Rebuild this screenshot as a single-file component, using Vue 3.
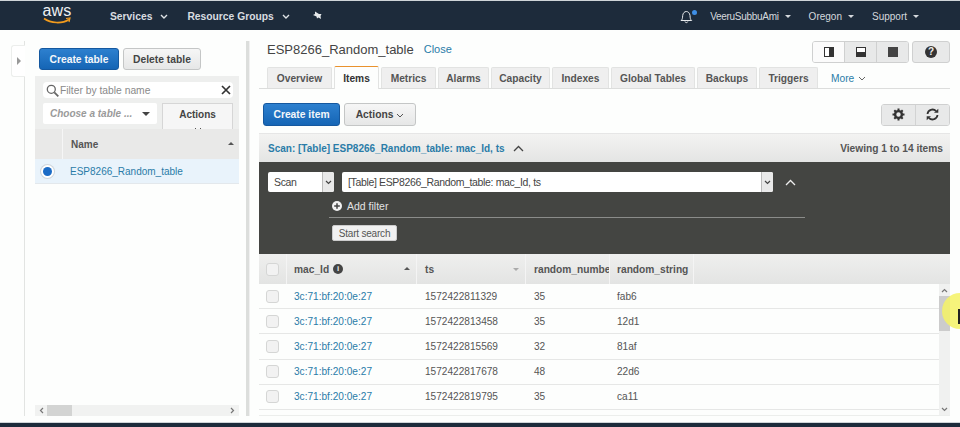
<template>
  <div class="page">
    <header class="topbar">
      <div class="logo">
        <span class="logo-text">aws</span>
        <svg width="29" height="8" viewBox="0 0 29 8"><path d="M1 1.5C8 6.5 19 7 26 2.5" fill="none" stroke="#f29b1d" stroke-width="1.6"/><path d="M23 1.5l4-.5-1 4" fill="none" stroke="#f29b1d" stroke-width="1.2"/></svg>
      </div>
      <nav class="nav-left">
        <span class="nav-item">Services <svg class="chev" width="8" height="5" viewBox="0 0 8 5"><path d="M1 1l3 3 3-3" fill="none" stroke="#dfe3e6" stroke-width="1.4"/></svg></span>
        <span class="nav-item">Resource Groups <svg class="chev" width="8" height="5" viewBox="0 0 8 5"><path d="M1 1l3 3 3-3" fill="none" stroke="#dfe3e6" stroke-width="1.4"/></svg></span>
        <svg class="pin" width="10" height="11" viewBox="0 0 10 11"><path d="M3 .5l4 2.500 2.500 0-1 2 .5 3-2.500-1.500-1.500 1-.5-2L1 4l2-1z" fill="#e6e9eb"/></svg>
      </nav>
      <nav class="nav-right">
        <span class="bell">
          <svg width="13" height="14" viewBox="0 0 13 14"><path d="M1 10.500c1.500-1 1.500-2.500 1.700-5C3 3 4.500 1.500 6.300 1.500S9.700 3 10 5.500c.2 2.500.2 4 1.700 5zM5 11.500c.3 1.500 2.500 1.500 2.800 0" fill="none" stroke="#e6e9eb" stroke-width="1"/></svg>
          <i class="dot"></i>
        </span>
        <span class="nav-small user">VeeruSubbuAmi <b class="caret"></b></span>
        <span class="nav-small region">Oregon <b class="caret"></b></span>
        <span class="nav-small">Support <b class="caret"></b></span>
      </nav>
    </header>

    <main class="main">
      <div class="rail">
        <div class="handle"><b></b></div>
      </div>

      <section class="left">
        <div class="left-buttons">
          <button class="btn primary" type="button">Create table</button>
          <button class="btn" type="button">Delete table</button>
        </div>
        <div class="filter-panel">
          <div class="search">
            <svg width="13" height="13" viewBox="0 0 13 13"><circle cx="5.300" cy="5.300" r="4" fill="none" stroke="#666" stroke-width="1.300"/><path d="M8.300 8.300l4 4" stroke="#666" stroke-width="1.800"/></svg>
            <span class="search-text">Filter by table name</span>
            <svg width="10" height="10" viewBox="0 0 10 10"><path d="M1 1l8 8M9 1l-8 8" stroke="#333" stroke-width="1.700"/></svg>
          </div>
          <div class="filter-row">
            <div class="choose"><span>Choose a table ...</span><b></b></div>
            <div class="actions-mini">
              <span>Actions</span>
              <svg width="8" height="5" viewBox="0 0 8 5"><path d="M1 1l3 3 3-3" fill="none" stroke="#555" stroke-width="1"/></svg>
            </div>
          </div>
        </div>
        <div class="name-head">
          <div class="radio-head"></div>
          <div class="name-title">Name</div>
          <b class="sort-up"></b>
        </div>
        <div class="name-row">
          <span class="radio"></span>
          <a class="link">ESP8266_Random_table</a>
        </div>
        <div class="spacer"></div>
        <div class="hscroll">
          <svg width="5" height="7" viewBox="0 0 5 7"><path d="M4 1L1.500 3.500 4 6" fill="none" stroke="#777" stroke-width="1.200"/></svg>
          <div class="hthumb"></div>
          <svg class="hnext" width="5" height="7" viewBox="0 0 5 7"><path d="M1 1l2.500 2.500L1 6" fill="none" stroke="#777" stroke-width="1.200"/></svg>
        </div>
      </section>

      <div class="divider"></div>

      <section class="right">
        <div class="title-row">
          <h1>ESP8266_Random_table</h1>
          <a class="close-link">Close</a>
          <div class="title-tools">
            <div class="seg">
              <span class="seg-btn active"><i class="ico ico-split"></i></span>
              <span class="seg-btn"><i class="ico ico-bottom"></i></span>
              <span class="seg-btn"><i class="ico ico-full"></i></span>
            </div>
            <span class="help"><i>?</i></span>
          </div>
        </div>

        <div class="tabs">
          <span
            v-for="t in tabs"
            :key="t.name"
            :class="['tab', { current: t.name === 'Items' }]"
            :style="{ width: t.width + 'px' }"
          >{{ t.name }}</span>
          <a class="more">More <svg width="8" height="5" viewBox="0 0 8 5"><path d="M1 1l3 3 3-3" fill="none" stroke="#666" stroke-width="1"/></svg></a>
        </div>

        <div class="toolbar">
          <button class="btn primary item-btn" type="button">Create item</button>
          <button class="btn actions-btn" type="button">Actions <svg width="8" height="5" viewBox="0 0 8 5"><path d="M1 1l3 3 3-3" fill="none" stroke="#555" stroke-width="1"/></svg></button>
          <div class="tool-group">
            <span class="tool">
              <svg width="13" height="13" viewBox="0 0 13 13"><circle cx="6.500" cy="6.500" r="3.400" fill="none" stroke="#333" stroke-width="2.400"/><path d="M6.500.5v2.400M6.500 10.100v2.400M.5 6.500h2.400M10.100 6.500h2.400M2.300 2.300l1.700 1.700M9 9l1.700 1.700M10.700 2.300L9 4M4 9l-1.700 1.700" stroke="#333" stroke-width="2"/></svg>
            </span>
            <span class="tool">
              <svg width="15" height="13" viewBox="0 0 15 13"><path d="M2.500 6A5 5 0 0 1 11 3M12.500 7A5 5 0 0 1 4 10" fill="none" stroke="#333" stroke-width="1.800"/><path d="M9 4.800h4.300V.7zM6 8.200H1.700v4.100z" fill="#333"/></svg>
            </span>
          </div>
        </div>

        <div class="scan-head">
          <a class="scan-title">Scan: [Table] ESP8266_Random_table: mac_Id, ts</a>
          <svg width="11" height="7" viewBox="0 0 11 7"><path d="M1 6l4.500-4.500L10 6" fill="none" stroke="#444" stroke-width="1.300"/></svg>
          <span class="viewing">Viewing 1 to 14 items</span>
        </div>

        <div class="scan-panel">
          <div class="scan-row">
            <div class="select scan-select"><span>Scan</span><b><svg width="7" height="5" viewBox="0 0 7 5"><path d="M1 1l2.500 2.500L6 1" fill="none" stroke="#444" stroke-width="1.200"/></svg></b></div>
            <div class="select index-select"><span>[Table] ESP8266_Random_table: mac_Id, ts</span><b><svg width="7" height="5" viewBox="0 0 7 5"><path d="M1 1l2.500 2.500L6 1" fill="none" stroke="#444" stroke-width="1.200"/></svg></b></div>
            <svg class="collapse" width="11" height="7" viewBox="0 0 11 7"><path d="M1 6l4.500-4.500L10 6" fill="none" stroke="#eee" stroke-width="1.300"/></svg>
          </div>
          <div class="add-filter">
            <svg width="10" height="10" viewBox="0 0 10 10"><circle cx="5" cy="5" r="5" fill="#f2f2f2"/><path d="M5 2.200v5.600M2.200 5h5.600" stroke="#444" stroke-width="1.500"/></svg>
            <span>Add filter</span>
          </div>
          <div class="rule"></div>
          <button class="start" type="button">Start search</button>
        </div>

        <div class="grid-wrap">
          <div class="grid-head">
            <div class="c-check"><span class="check"></span></div>
            <div class="c-mac hcell">mac_Id <i class="info">i</i><b class="sort-up"></b></div>
            <div class="c-ts hcell">ts<b class="sort-dn"></b></div>
            <div class="c-num hcell clip">random_number</div>
            <div class="c-str hcell">random_string</div>
          </div>
          <div class="grid-body">
            <div v-for="r in rows" :key="r.ts" class="grid-row">
              <div class="c-check"><span class="check"></span></div>
              <div class="c-mac"><a class="link">{{ r.mac }}</a></div>
              <div class="c-ts">{{ r.ts }}</div>
              <div class="c-num">{{ r.num }}</div>
              <div class="c-str">{{ r.str }}</div>
            </div>
            <div class="grid-row partial"><div class="c-check"><span class="check"></span></div></div>
            <div class="vscroll">
              <svg width="7" height="5" viewBox="0 0 7 5"><path d="M1 4l2.500-2.500L6 4" fill="none" stroke="#777" stroke-width="1.200"/></svg>
              <div class="vthumb"></div>
              <svg class="vnext" width="7" height="5" viewBox="0 0 7 5"><path d="M1 1l2.500 2.500L6 1" fill="none" stroke="#777" stroke-width="1.200"/></svg>
            </div>
          </div>
        </div>
      </section>
    </main>

    <div class="cursor-spot"><i></i></div>
    <footer class="bottombar"></footer>
  </div>
</template>

<script setup>
const tabs = [
  { name: 'Overview', width: 65 },
  { name: 'Items', width: 45 },
  { name: 'Metrics', width: 55 },
  { name: 'Alarms', width: 51 },
  { name: 'Capacity', width: 59 },
  { name: 'Indexes', width: 57 },
  { name: 'Global Tables', width: 84 },
  { name: 'Backups', width: 60 },
  { name: 'Triggers', width: 59 }
]

const rows = [
  { mac: '3c:71:bf:20:0e:27', ts: '1572422811329', num: 35, str: 'fab6' },
  { mac: '3c:71:bf:20:0e:27', ts: '1572422813458', num: 35, str: '12d1' },
  { mac: '3c:71:bf:20:0e:27', ts: '1572422815569', num: 32, str: '81af' },
  { mac: '3c:71:bf:20:0e:27', ts: '1572422817678', num: 48, str: '22d6' },
  { mac: '3c:71:bf:20:0e:27', ts: '1572422819795', num: 35, str: 'ca11' }
]
</script>

<style>
html, body { margin: 0; background: #fdfefd; overflow: hidden; }
</style>

<style scoped>
.page {
  position: relative;
  width: 960px;
  height: 427px;
  overflow: hidden;
  display: flex;
  flex-direction: column;
  font-family: "Liberation Sans", Arial, sans-serif;
  font-size: 11px;
  color: #444;
  background: #fdfefd;
}

/* top bar */
.topbar {
  height: 29px;
  flex: none;
  display: flex;
  align-items: center;
  background: #1d2b3b;
  border-top: 1px solid #cfd4d8;
  box-sizing: content-box;
}
.logo {
  margin-left: 42px;
  width: 30px;
  display: flex;
  flex-direction: column;
  align-items: center;
  height: 26px;
}
.logo-text {
  font-size: 16px;
  line-height: 15px;
  color: #eef0f2;
  letter-spacing: 0.2px;
}
.logo svg { margin-top: -1px; }
.nav-left {
  margin-left: 38px;
  margin-top: 2px;
  display: flex;
  align-items: center;
}
.nav-item {
  font-size: 10.300px;
  font-weight: bold;
  color: #d9dde0;
  margin-right: 19px;
  display: flex;
  align-items: center;
  gap: 8px;
}
.pin { margin-left: 3px; }
.nav-right {
  margin-left: auto;
  margin-top: 2px;
  display: flex;
  align-items: center;
  margin-right: 41px;
}
.bell { position: relative; display: flex; margin-right: 17px; }
.dot {
  position: absolute;
  right: -4px;
  top: 0;
  width: 5px;
  height: 5px;
  border-radius: 50%;
  background: #3f8fe6;
}
.nav-small {
  font-size: 10px;
  color: #d5d9dd;
  display: flex;
  align-items: center;
  gap: 6px;
}
.user { margin-right: 18px; letter-spacing: -0.3px; }
.region { margin-right: 18px; }
.caret {
  display: inline-block;
  border-left: 3px solid transparent;
  border-right: 3px solid transparent;
  border-top: 3px solid #d5d9dd;
}

/* layout */
.main {
  flex: 1;
  min-height: 0;
  display: flex;
  padding-bottom: 6px;
}
.rail {
  width: 24px;
  flex: none;
  margin-top: 11px;
  border-right: 1px solid #e2e4e2;
  position: relative;
}
.handle {
  position: absolute;
  left: 11px;
  top: 4px;
  width: 13px;
  height: 30px;
  background: #fff;
  border: 1px solid #eceeec;
  border-right: 0;
  border-radius: 3px 0 0 3px;
  display: flex;
  align-items: center;
  justify-content: center;
}
.handle b {
  border-left: 4px solid #999;
  border-top: 4px solid transparent;
  border-bottom: 4px solid transparent;
}
.left {
  width: 204px;
  flex: none;
  margin-left: 10px;
  display: flex;
  flex-direction: column;
}
.left-buttons {
  display: flex;
  gap: 4px;
  padding: 18px 0 6px 4px;
}
.btn {
  height: 22px;
  padding: 0;
  font-family: inherit;
  font-size: 10.300px;
  font-weight: bold;
  color: #444;
  border: 1px solid #c4c6c6;
  border-radius: 3px;
  background: linear-gradient(#f6f6f6, #e6e7e7);
}
.left-buttons .btn { width: 78px; }
.left-buttons .btn.primary { width: 80px; }
.btn.primary {
  color: #f4f7fa;
  background: linear-gradient(#2d80cf, #1565b5);
  border-color: #15589f;
}
.filter-panel {
  background: #eeefee;
  height: 53px;
  box-sizing: border-box;
  padding: 6px 6px 0 8px;
  flex: none;
}
.search {
  height: 16px;
  background: #fff;
  border-radius: 4px;
  display: flex;
  align-items: center;
  padding: 0 2px 0 3px;
  gap: 1px;
}
.search-text { flex: 1; font-size: 10.300px; color: #8a8a8a; }
.filter-row {
  display: flex;
  gap: 5px;
  margin-top: 5px;
}
.choose {
  width: 114px;
  height: 21px;
  background: #fff;
  border-radius: 2px;
  box-sizing: border-box;
  padding: 0 7px;
  display: flex;
  align-items: center;
  justify-content: space-between;
  font-size: 10px;
  font-style: italic;
  font-weight: bold;
  color: #9a9a9a;
}
.choose b {
  border-left: 4px solid transparent;
  border-right: 4px solid transparent;
  border-top: 4px solid #444;
}
.actions-mini {
  width: 71px;
  height: 26px;
  padding-top: 5px;
  box-sizing: border-box;
  display: flex;
  flex-direction: column;
  align-items: center;
  overflow: hidden;
  font-size: 10px;
  font-weight: bold;
  background: #f6f6f6;
  border: 1px solid #d6d6d6;
  border-bottom: 0;
}
.actions-mini svg { flex: none; margin-top: 7px; }
.name-head {
  height: 30px;
  flex: none;
  display: flex;
  align-items: center;
  background: #e9e9e8;
  position: relative;
}
.radio-head {
  width: 27px;
  height: 100%;
  border-right: 1px solid #f6f6f6;
}
.name-title {
  margin-left: 8px;
  font-weight: bold;
  font-size: 10px;
  color: #555;
}
.sort-up {
  position: absolute;
  right: 5px;
  top: 13px;
  border-left: 3px solid transparent;
  border-right: 3px solid transparent;
  border-bottom: 3px solid #555;
}
.name-row {
  height: 25px;
  flex: none;
  display: flex;
  align-items: center;
  background: #e9f3fb;
  border-bottom: 1px solid #e3e8ec;
  box-sizing: border-box;
  padding-left: 8px;
}
.radio {
  width: 9px;
  height: 9px;
  border-radius: 50%;
  background: #1c6cc6;
  box-shadow: 0 0 0 2px #fff, 0 0 0 3px #cfd6dc;
  margin-right: 18px;
}
.link { color: #2a7ca8; font-size: 10px; }
.spacer { flex: 1; }
.hscroll {
  height: 11px;
  flex: none;
  background: #f1f2f1;
  display: flex;
  align-items: center;
  padding: 0 4px 0 4px;
}
.hthumb { width: 25px; height: 11px; background: #d3d4d3; margin-left: 3px; }
.hnext { margin-left: auto; }
.divider {
  width: 4px;
  flex: none;
  margin-left: 7px;
  margin-top: 11px;
  background: #dcdedc;
  border-right: 1px solid #f0f0f0;
  box-sizing: border-box;
}

/* right side */
.right {
  width: 691px;
  flex: none;
  display: flex;
  flex-direction: column;
  position: relative;
  margin-left: 9px;
}
.title-row {
  height: 36px;
  flex: none;
  display: flex;
  align-items: center;
  padding: 0 0 0 8px;
  box-sizing: border-box;
  margin-top: 1px;
}
h1 {
  margin: 0;
  font-size: 13px;
  font-weight: normal;
  color: #444;
}
.close-link { margin-left: 10px; color: #2a7ca8; font-size: 11px; }
.title-tools {
  margin-left: auto;
  align-self: flex-start;
  display: flex;
  gap: 3px;
  margin-top: 10px;
}
.seg {
  display: flex;
  width: 97px;
  height: 22px;
  border: 1px solid #cfd0d0;
  border-radius: 3px;
  box-sizing: border-box;
  overflow: hidden;
}
.seg-btn {
  flex: 1;
  display: flex;
  align-items: center;
  justify-content: center;
  background: #e8e9e9;
  border-left: 1px solid #cfd0d0;
}
.seg-btn:first-child { border-left: 0; }
.seg-btn.active { background: #fbfbfb; }
.ico {
  width: 10px;
  height: 10px;
  box-sizing: border-box;
  border: 1.500px solid #333;
  background: #fff;
}
.ico-split { background: linear-gradient(90deg, #fff 50%, #333 50%); }
.ico-bottom { background: linear-gradient(#fff 50%, #333 50%); }
.ico-full { background: #444; border-color: #444; }
.help {
  width: 38px;
  height: 22px;
  border: 1px solid #cfd0d0;
  border-radius: 3px;
  background: #e8e9e9;
  box-sizing: border-box;
  display: flex;
  align-items: center;
  justify-content: center;
}
.help i {
  width: 12px;
  height: 12px;
  border-radius: 50%;
  background: #333;
  color: #eee;
  font-style: normal;
  font-weight: bold;
  font-size: 10px;
  line-height: 12px;
  text-align: center;
}
.tabs {
  height: 22px;
  flex: none;
  display: flex;
  align-items: flex-end;
  gap: 2px;
  padding-left: 8px;
  border-bottom: 1px solid #dcdddc;
  box-sizing: border-box;
}
.tab {
  height: 21px;
  box-sizing: border-box;
  padding-top: 1px;
  display: flex;
  align-items: center;
  justify-content: center;
  font-size: 10.200px;
  font-weight: bold;
  color: #555;
  background: #efefef;
  border: 1px solid #e2e3e2;
  border-bottom: 0;
  border-radius: 2px 2px 0 0;
}
.tab.current {
  height: 23px;
  margin-bottom: -1px;
  background: #fdfefd;
  color: #333;
  border-top: 1px solid #e9922d;
}
.more {
  margin-left: 11px;
  height: 21px;
  padding-top: 1px;
  box-sizing: border-box;
  display: flex;
  align-items: center;
  gap: 4px;
  color: #2a7ca8;
  font-size: 10.200px;
}
.toolbar {
  height: 44px;
  flex: none;
  display: flex;
  align-items: center;
  padding: 7px 0 0 4px;
  gap: 4px;
  box-sizing: border-box;
}
.item-btn { width: 77px; height: 23px; }
.actions-btn { width: 72px; height: 23px; }
.tool-group {
  margin-left: auto;
  display: flex;
  width: 69px;
  height: 22px;
  border: 1px solid #cfd0d0;
  border-radius: 3px;
  box-sizing: border-box;
  overflow: hidden;
}
.tool {
  flex: 1;
  display: flex;
  align-items: center;
  justify-content: center;
  background: #e8e9e9;
  border-left: 1px solid #d2d3d3;
}
.tool:first-child { border-left: 0; }
.scan-head {
  height: 29px;
  flex: none;
  display: flex;
  align-items: center;
  padding: 0 7px 0 9px;
  gap: 8px;
  background: linear-gradient(#f3f3f2, #e4e5e4);
  border-top: 1px solid #e6e6e6;
  box-sizing: border-box;
}
.scan-title {
  color: #2a7ca8;
  font-weight: bold;
  font-size: 10px;
}
.viewing {
  margin-left: auto;
  font-weight: bold;
  font-size: 10.200px;
  color: #555;
}
.scan-panel {
  height: 92px;
  flex: none;
  background: #444542;
  padding: 10px 0 0 9px;
  box-sizing: border-box;
}
.scan-row {
  display: flex;
  align-items: center;
  height: 20px;
}
.select {
  height: 20px;
  background: #fff;
  border-radius: 2px;
  display: flex;
  align-items: center;
  justify-content: space-between;
  font-size: 10.500px;
  letter-spacing: -0.35px;
  color: #444;
  box-sizing: border-box;
  padding-left: 6px;
  overflow: hidden;
}
.select b {
  width: 11px;
  height: 100%;
  background: #e9e9e9;
  border-left: 1px solid #bbb;
  display: flex;
  align-items: center;
  justify-content: center;
}
.scan-select { width: 66px; }
.index-select { width: 431px; margin-left: 8px; }
.collapse { margin-left: 12px; }
.add-filter {
  margin: 8px 0 0 64px;
  height: 12px;
  display: flex;
  align-items: center;
  gap: 5px;
  color: #e2e2e2;
  font-size: 10.500px;
}
.rule {
  width: 476px;
  height: 1px;
  margin: 5px 0 0 61px;
  background: #8b8c8a;
}
.start {
  display: block;
  width: 65px;
  height: 16px;
  margin: 7px 0 0 64px;
  padding: 0;
  font-family: inherit;
  font-size: 10px;
  letter-spacing: -0.2px;
  color: #555;
  background: #f1f1f1;
  border: 1px solid #ccc;
  border-radius: 2px;
}
.grid-wrap {
  flex: 1;
  min-height: 0;
  display: flex;
  flex-direction: column;
}
.grid-head {
  height: 30px;
  flex: none;
  display: flex;
  background: linear-gradient(#efefee, #e3e4e3);
  font-weight: bold;
  font-size: 10.200px;
  color: #555;
}
.grid-head > div {
  height: 100%;
  display: flex;
  align-items: center;
  position: relative;
  border-right: 1px solid #f4f4f4;
  box-sizing: border-box;
}
.c-check {
  width: 28px;
  flex: none;
  display: flex;
  align-items: center;
  padding-left: 7px;
  box-sizing: border-box;
}
.c-mac { width: 130px; flex: none; padding-left: 7px; box-sizing: border-box; }
.c-ts { width: 109px; flex: none; padding-left: 8px; box-sizing: border-box; }
.c-num { width: 84px; flex: none; padding-left: 8px; box-sizing: border-box; overflow: hidden; white-space: nowrap; }
.c-str { width: 84px; flex: none; padding-left: 7px; box-sizing: border-box; }
.info {
  width: 10px;
  height: 10px;
  margin-left: 4px;
  border-radius: 50%;
  background: #444;
  color: #eee;
  font-style: normal;
  font-size: 8px;
  line-height: 10px;
  text-align: center;
}
.hcell .sort-up { right: 6px; top: 13px; }
.sort-dn {
  position: absolute;
  right: 6px;
  top: 14px;
  border-left: 3px solid transparent;
  border-right: 3px solid transparent;
  border-top: 3px solid #aaa;
}
.check {
  width: 13px;
  height: 13px;
  box-sizing: border-box;
  background: #f2f2f2;
  border: 1px solid #d5d6d5;
  border-radius: 3px;
}
.grid-body {
  flex: 1;
  min-height: 0;
  position: relative;
  overflow: hidden;
  border-bottom: 1px solid #eceeec;
  box-sizing: border-box;
}
.grid-row {
  height: 25.200px;
  display: flex;
  align-items: center;
  font-size: 10.100px;
  color: #555;
  border-bottom: 1px solid #e6e7e6;
  box-sizing: border-box;
}
.grid-row .link { font-size: 10.100px; }
.grid-row.partial { border-bottom: 0; align-items: flex-start; padding-top: 5px; }
.vscroll {
  position: absolute;
  right: 0;
  top: 0;
  bottom: 0;
  width: 11px;
  background: #f0f1f0;
  display: flex;
  flex-direction: column;
  align-items: center;
  padding: 4px 0 3px;
  box-sizing: border-box;
}
.vthumb { width: 11px; height: 35px; margin-top: 3px; background: #ccc; }
.vnext { margin-top: auto; }

.cursor-spot {
  position: absolute;
  left: 942px;
  top: 293px;
  width: 36px;
  height: 36px;
  border-radius: 50%;
  background: rgba(244, 242, 100, 0.85);
}
.cursor-spot i {
  position: absolute;
  left: 16px;
  top: 16px;
  width: 4px;
  height: 15px;
  background: #222;
}
.bottombar {
  height: 4px;
  flex: none;
  background: #1d2b3b;
  border-top: 1px solid #cfd4d8;
}
</style>
